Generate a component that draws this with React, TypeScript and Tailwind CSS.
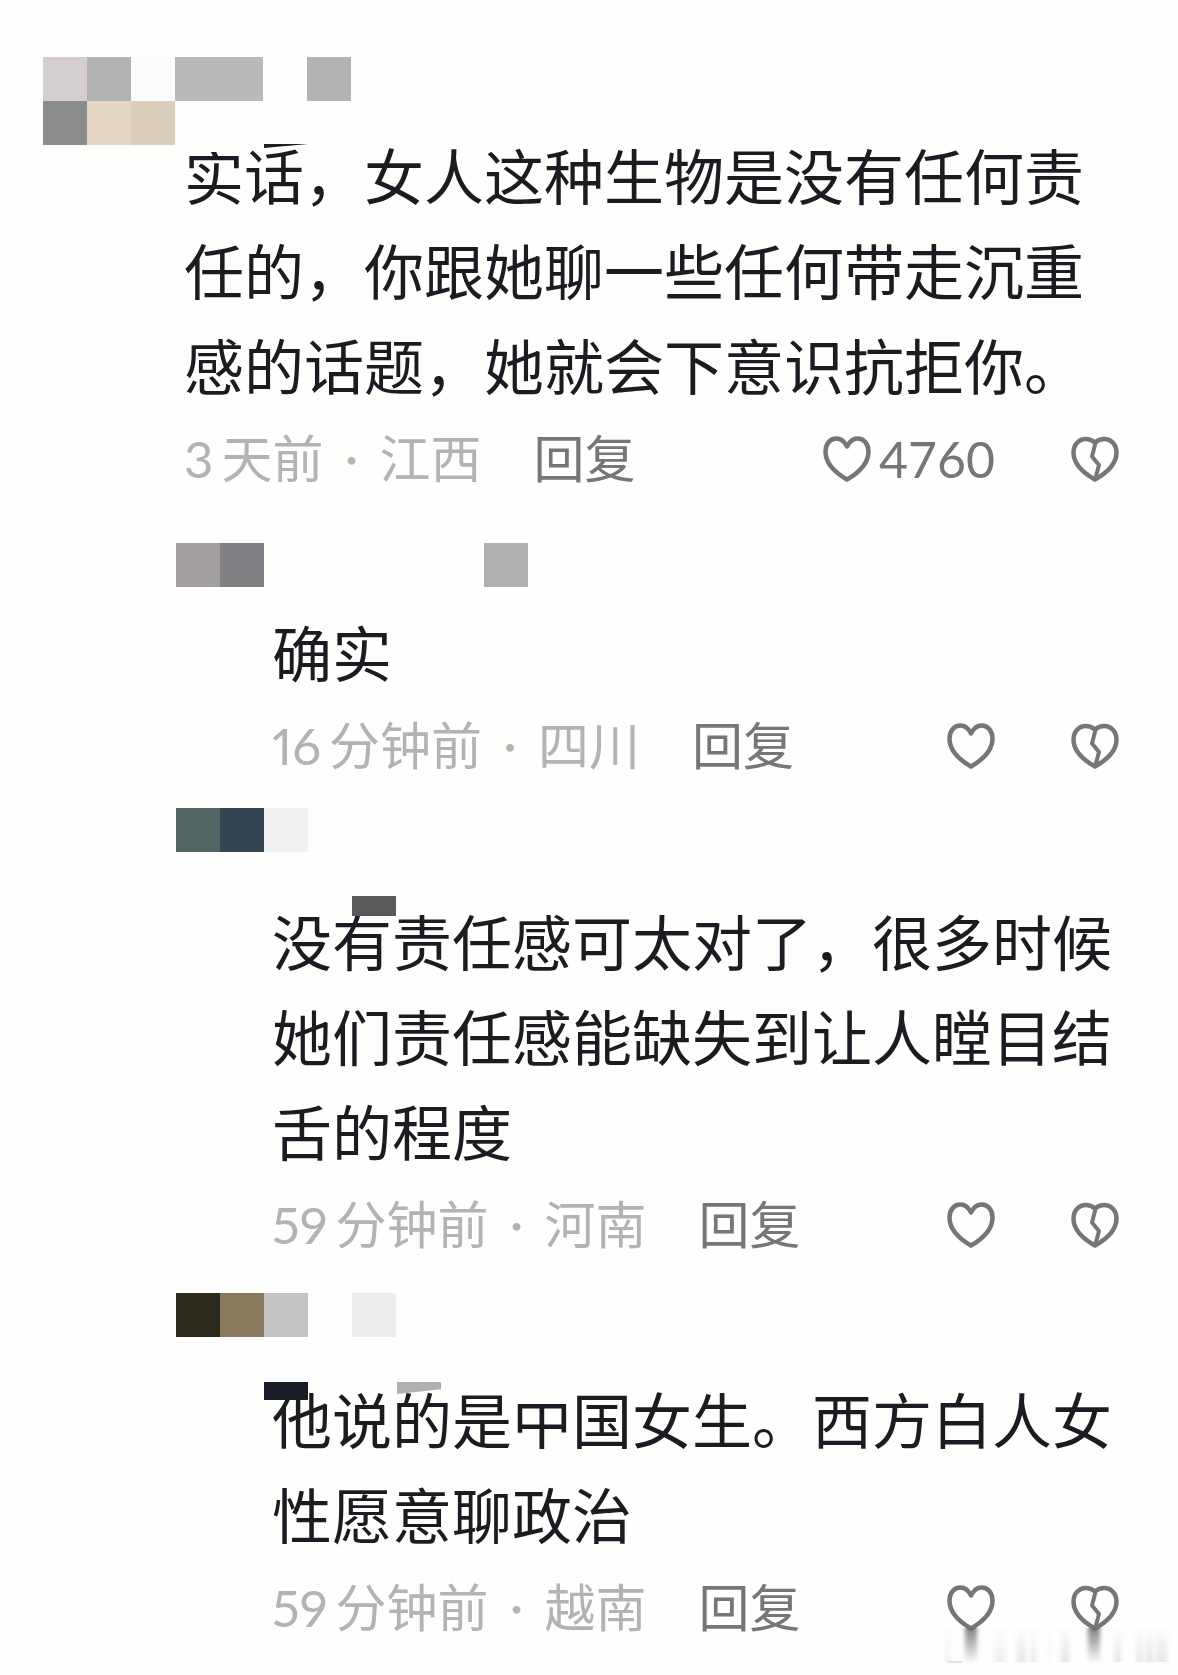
import { ReactNode } from 'react'

const comments = [
  {
    id: 1,
    count: '3',
    unit: '天前',
    place: '江西',
    likes: '4760',
    text: '实话，女人这种生物是没有任何责任的，你跟她聊一些任何带走沉重感的话题，她就会下意识抗拒你。',
  },
  { id: 2, count: '16', unit: '分钟前', place: '四川', likes: '', text: '确实' },
  {
    id: 3,
    count: '59',
    unit: '分钟前',
    place: '河南',
    likes: '',
    text: '没有责任感可太对了，很多时候她们责任感能缺失到让人瞠目结舌的程度',
  },
  { id: 4, count: '59', unit: '分钟前', place: '越南', likes: '', text: '他说的是中国女生。西方白人女性愿意聊政治' },
]

type Comment = (typeof comments)[number]

function HeartIcon() {
  return (
    <svg viewBox="0 0 48 46" className="h-[46px] w-12" fill="none" stroke="currentColor" strokeWidth="4.5" strokeLinejoin="round" aria-hidden="true">
      <path d="M24 10.5C21.5 5.500 18 2.500 13.500 2.500 7 2.500 2.500 8 2.500 15.500 2.500 26.500 11 36 24 43.500 37 36 45.500 26.500 45.500 15.500 45.500 8 41 2.500 34.500 2.500 30 2.500 26.500 5.500 24 10.500Z" />
    </svg>
  )
}

function BrokenHeartIcon() {
  return (
    <svg viewBox="0 0 48 46" className="h-[46px] w-12" fill="none" stroke="currentColor" strokeWidth="4.5" strokeLinejoin="round" aria-hidden="true">
      <path d="M24 6.500C21 4 18.500 3 15 3 8 3 2.500 8.500 2.500 16.500 2.500 27.500 11.500 36.500 24 43.500 36.500 36.500 45.500 27.500 45.500 16.500 45.500 8.500 40 3 33 3 29.500 3 27 4 24 6.500Z" />
      <path d="M24.500 7 21 20.500 28 29 24.500 42" strokeWidth="4" />
    </svg>
  )
}

/* Pixelated strip that hides the avatar and user name */
function Mosaic({ tiles }: { tiles: string[] }) {
  return (
    <div className="flex" aria-hidden="true">
      {tiles.map((tile, i) => (
        <span key={i} className={`h-11 w-11 shrink-0 ${tile}`} />
      ))}
    </div>
  )
}

function Meta({ comment }: { comment: Comment }) {
  return (
    <div className="mt-3 flex h-16 items-center justify-between text-[51px] leading-[64px] text-[#757679]">
      <div className="flex items-center whitespace-nowrap">
        <span className="flex gap-2 text-[#b3b3b4]">
          <span className="proportional-nums">{comment.count}</span>
          <span>{comment.unit}</span>
        </span>
        <span className="w-14 text-center font-['Noto_Sans_CJK_SC',sans-serif] text-4xl text-[#b3b3b4]">·</span>
        <span className="text-[#b3b3b4]">{comment.place}</span>
        <button type="button" className="ml-13">回复</button>
      </div>
      <div className="flex items-center gap-19">
        <button type="button" aria-label="赞" className="flex items-center gap-2">
          <HeartIcon />
          {comment.likes && <span className="text-[50px]">{comment.likes}</span>}
        </button>
        <button type="button" aria-label="踩">
          <BrokenHeartIcon />
        </button>
      </div>
    </div>
  )
}

function Body({ comment, className, children }: { comment: Comment; className: string; children?: ReactNode }) {
  return (
    <div className={`relative ${className}`}>
      <p className="text-[60px] leading-[95px] text-[#1b1c22]">{comment.text}</p>
      {children}
      <Meta comment={comment} />
    </div>
  )
}

/* Faded strip at the bottom right corner */
function Smear() {
  const bars = [
    { x: 46, w: 3, o: 0.15 },
    { x: 65, w: 12, o: 0.85 },
    { x: 95, w: 10, o: 0.1 },
    { x: 117, w: 9, o: 0.16 },
    { x: 131, w: 5, o: 0.14 },
    { x: 149, w: 2, o: 0.08 },
    { x: 161, w: 8, o: 0.18 },
    { x: 188, w: 12, o: 0.85 },
    { x: 215, w: 6, o: 0.18 },
    { x: 236, w: 7, o: 0.14 },
    { x: 246, w: 7, o: 0.17 },
    { x: 256, w: 11, o: 0.16 },
  ]
  return (
    <svg viewBox="0 0 278 40" className="pointer-events-none absolute right-0 bottom-3 h-10 w-[278px]" aria-hidden="true">
      <defs>
        <linearGradient id="down" x1="0" y1="0" x2="0" y2="1">
          <stop offset="0" stopColor="#6a6b6e" />
          <stop offset="1" stopColor="#6a6b6e" stopOpacity="0.05" />
        </linearGradient>
        <linearGradient id="up" x1="0" y1="0" x2="0" y2="1">
          <stop offset="0" stopColor="#6a6b6e" stopOpacity="0.1" />
          <stop offset="1" stopColor="#6a6b6e" />
        </linearGradient>
        <filter id="soft">
          <feGaussianBlur stdDeviation="2 0.5" />
        </filter>
      </defs>
      <g filter="url(#soft)">
        {bars.map((bar) => (
          <rect key={bar.x} x={bar.x} y="5" width={bar.w} height="34" opacity={bar.o} fill={bar.o > 0.5 ? 'url(#down)' : 'url(#up)'} />
        ))}
      </g>
      <path d="M48 39H62" stroke="#c4c4c4" strokeWidth="1" />
    </svg>
  )
}

export default function App() {
  return (
    <main
      className="relative min-h-screen overflow-hidden bg-[#fefefd] pt-[57px] pr-[59px] pb-8 pl-[43px] font-['Lato','Noto_Sans_CJK_SC',sans-serif]"
      lang="zh-CN"
    >
      <article>
        <Mosaic tiles={['bg-[#d5cecf]', 'bg-[#b2b2b2]', 'bg-[#fafcfc]', 'bg-[#b9b9bb]', 'bg-[#bababc]', '', 'bg-[#b3b3b3]']} />
        <Mosaic tiles={['bg-[#8b8c8e]', 'bg-[#e5d9c6]', 'bg-[#dacdb9]']} />
        <Body comment={comments[0]} className="-mt-[15px] ml-[141px]">
          <span className="absolute top-0 left-0 h-5.5 w-15 bg-[#fefefd]" />
          <span className="absolute top-3.5 left-20 h-1 w-11 bg-[#1b1c22] [clip-path:polygon(0_0,100%_0,0_100%)]" />
        </Body>
      </article>

      <div className="ml-[133px]">
        <article className="mt-[52px]">
          <Mosaic tiles={['bg-[#a39f9f]', 'bg-[#818084]', '', '', '', '', '', 'bg-[#b0b0b1]']} />
          <Body comment={comments[1]} className="mt-5 ml-24" />
        </article>

        <article className="mt-[30px]">
          <Mosaic tiles={['bg-[#546663]', 'bg-[#34454f]', 'bg-[#f1f1f0]']} />
          <Body comment={comments[2]} className="mt-11 ml-24">
            <span className="absolute top-0 left-20 h-5 w-11 bg-[#59595b]" />
          </Body>
        </article>

        <article className="mt-9">
          <Mosaic tiles={['bg-[#2c2a1c]', 'bg-[#897a5d]', 'bg-[#c3c3c3]', '', 'bg-[#ededed]']} />
          <Body comment={comments[3]} className="mt-[37px] ml-24">
            <span className="absolute top-2 -left-2 h-[18px] w-11 bg-[#191b26]" />
            <span className="absolute top-2 left-[125px] h-3 w-11 bg-[#b0b0b0] [clip-path:polygon(0_0,100%_0,100%_60%,0_100%)]" />
            <span className="absolute top-2 left-60 h-5.5 w-15 bg-[#fefefd]" />
          </Body>
        </article>
      </div>
      <Smear />
    </main>
  )
}
